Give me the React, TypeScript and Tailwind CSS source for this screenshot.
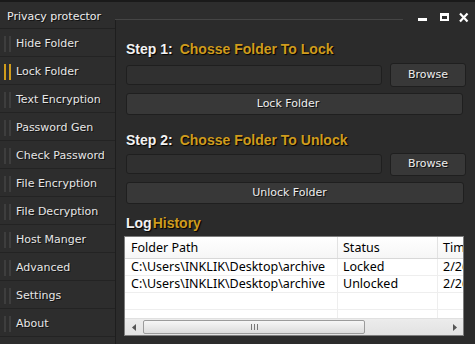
import React from "react";

const items = [
  "Hide Folder",
  "Lock Folder",
  "Text Encryption",
  "Password Gen",
  "Check Password",
  "File Encryption",
  "File Decryption",
  "Host Manger",
  "Advanced",
  "Settings",
  "About",
];

const rows = [
  ["C:\\Users\\INKLIK\\Desktop\\archive", "Locked", "2/26/2014 10:21 AM"],
  ["C:\\Users\\INKLIK\\Desktop\\archive", "Unlocked", "2/26/2014 10:22 AM"],
  ["", "", ""],
];

function Heading({ a, b, gap = true }: { a: string; b: string; gap?: boolean }) {
  return (
    <div className="h-[16px] leading-[16px] text-[14px] font-bold font-['Liberation_Sans',sans-serif] whitespace-nowrap [text-shadow:1px_1px_1px_#000]">
      <span className="text-[#f2f2f2]">{a}</span>
      <span className={gap ? "text-[#cf9c1d] ml-[7px]" : "text-[#cf9c1d] ml-[1px]"}>{b}</span>
    </div>
  );
}

function Btn({ label, className }: { label: string; className: string }) {
  return (
    <div
      className={
        "flex items-center justify-center rounded-[3px] border border-[#1f1f1f] bg-[#383838] text-[#ededed] text-[11px] [text-shadow:1px_1px_0_#111] " +
        className
      }
    >
      {label}
    </div>
  );
}

export default function App() {
  return (
    <div className="relative w-[475px] h-[344px] overflow-hidden bg-[#2d2d2d] border-t-2 border-[#1a1a1a] flex font-['DejaVu_Sans',sans-serif]">
      {/* Sidebar */}
      <div className="w-[115px] shrink-0 flex flex-col">
        <div className="h-[27px] border-b border-[#222] pl-[7px] pt-[8px] text-[11px] leading-[14px] text-[#ececec] [text-shadow:1px_1px_0_#111]">
          Privacy protector
        </div>
        {items.map((it, i) => (
          <div key={it} className="h-[28px] border-b border-[#232323] flex items-center">
            <div className="flex gap-[3px] ml-[4px] mt-[2px]">
              <div className={"w-[2px] h-[16px] " + (i === 1 ? "bg-[#d09c1c]" : "bg-[#3e3e3e]")} />
              <div className={"w-[2px] h-[16px] " + (i === 1 ? "bg-[#d09c1c]" : "bg-[#3e3e3e]")} />
            </div>
            <span className="ml-[5px] pt-[3px] text-[11px] text-[#e6e6e6] [text-shadow:1px_1px_0_#111] whitespace-nowrap">{it}</span>
          </div>
        ))}
      </div>

      {/* Right column */}
      <div className="w-[360px] shrink-0 flex flex-col">
        <div className="h-[17px] shrink-0" />
        <div className="h-px w-[288px] bg-[#454545] shrink-0" />
        <div className="flex-1 bg-[#2b2b2b] border-l border-[#1e1e1e] pl-[10px] flex flex-col items-start">
          <div className="mt-[21px]">
            <Heading a="Step 1:" b="Chosse Folder To Lock" />
          </div>
          <div className="mt-[6px] h-[24px] flex items-center gap-[8px]">
            <div className="w-[256px] h-[20px] rounded-[3px] bg-[#303030] border border-[#1f1f1f]" />
            <Btn label="Browse" className="w-[76px] h-[24px]" />
          </div>
          <Btn label="Lock Folder" className="mt-[6px] w-[337px] h-[22px] pr-[13px]" />

          <div className="mt-[17px]">
            <Heading a="Step 2:" b="Chosse Folder To Unlock" />
          </div>
          <div className="mt-[4px] h-[24px] flex items-center gap-[8px]">
            <div className="w-[256px] h-[20px] rounded-[3px] bg-[#303030] border border-[#1f1f1f]" />
            <Btn label="Browse" className="w-[76px] h-[23px]" />
          </div>
          <Btn label="Unlock Folder" className="mt-[6px] w-[338px] h-[22px] pr-[11px]" />

          <div className="mt-[11px]">
            <Heading a="Log" b="History" gap={false} />
          </div>

          {/* Table */}
          <div className="mt-[5px] ml-[-2px] w-[340px] h-[100px] overflow-hidden border border-[#7d7d7d] bg-white">
            <div className="w-[338px] h-[98px] flex flex-col font-['Noto_Sans',sans-serif] text-[12.5px] leading-[16px] text-black">
              <div className="h-[22px] shrink-0 flex border-b border-[#d8d8d8] bg-gradient-to-b from-white to-[#f6f6f6]">
                <div className="w-[213px] shrink-0 border-r border-[#e2e2e2] pl-[6px] flex items-center">Folder Path</div>
                <div className="w-[100px] shrink-0 border-r border-[#e2e2e2] pl-[5px] flex items-center">Status</div>
                <div className="w-[25px] shrink-0 pl-[5px] flex items-center whitespace-nowrap overflow-hidden">Time</div>
              </div>
              {rows.map((r, i) => (
                <div key={i} className="h-[17px] shrink-0 flex border-b border-[#eeeeee]">
                  <div className="w-[213px] shrink-0 border-r border-[#eeeeee] pl-[6px] flex items-center whitespace-nowrap overflow-hidden">{r[0]}</div>
                  <div className="w-[100px] shrink-0 border-r border-[#eeeeee] pl-[5px] flex items-center whitespace-nowrap overflow-hidden">{r[1]}</div>
                  <div className="w-[25px] shrink-0 pl-[5px] flex items-center whitespace-nowrap overflow-hidden">{r[2]}</div>
                </div>
              ))}
              <div className="flex-1 flex">
                <div className="w-[213px] shrink-0 border-r border-[#eeeeee]" />
                <div className="w-[100px] shrink-0 border-r border-[#eeeeee]" />
              </div>
              <div className="h-[17px] shrink-0 flex items-center bg-gradient-to-b from-[#ececec] to-[#e2e2e2] border-t border-[#e0e0e0]">
                <div className="w-[18px] shrink-0 flex items-center justify-center">
                  <svg width="5" height="7" viewBox="0 0 5 7"><path d="M4 0 L0 3.5 L4 7 Z" fill="#555" /></svg>
                </div>
                <div className="w-[222px] shrink-0 h-[14px] rounded-[2px] border border-[#9b9b9b] bg-gradient-to-b from-[#f6f6f6] to-[#dcdcdc] flex items-center justify-center gap-[2px]">
                  <div className="w-px h-[6px] bg-[#777]" />
                  <div className="w-px h-[6px] bg-[#777]" />
                  <div className="w-px h-[6px] bg-[#777]" />
                </div>
                <div className="flex-1" />
                <div className="w-[18px] shrink-0 flex items-center justify-center">
                  <svg width="5" height="7" viewBox="0 0 5 7"><path d="M1 0 L5 3.5 L1 7 Z" fill="#555" /></svg>
                </div>
              </div>
            </div>
          </div>
        </div>
      </div>

      {/* Window controls overlay */}
      <svg className="absolute left-[417px] top-[10px]" width="53" height="11" viewBox="0 0 53 11">
        <rect x="1" y="6" width="9" height="3" fill="#fff" />
        <rect x="23" y="1" width="9" height="8" fill="#fff" />
        <rect x="25" y="4" width="5" height="3" fill="#2d2d2d" />
        <path d="M43 1.5 L50.5 9.5 M50.5 1.5 L43 9.5" stroke="#fff" strokeWidth="2.2" />
      </svg>
    </div>
  );
}
